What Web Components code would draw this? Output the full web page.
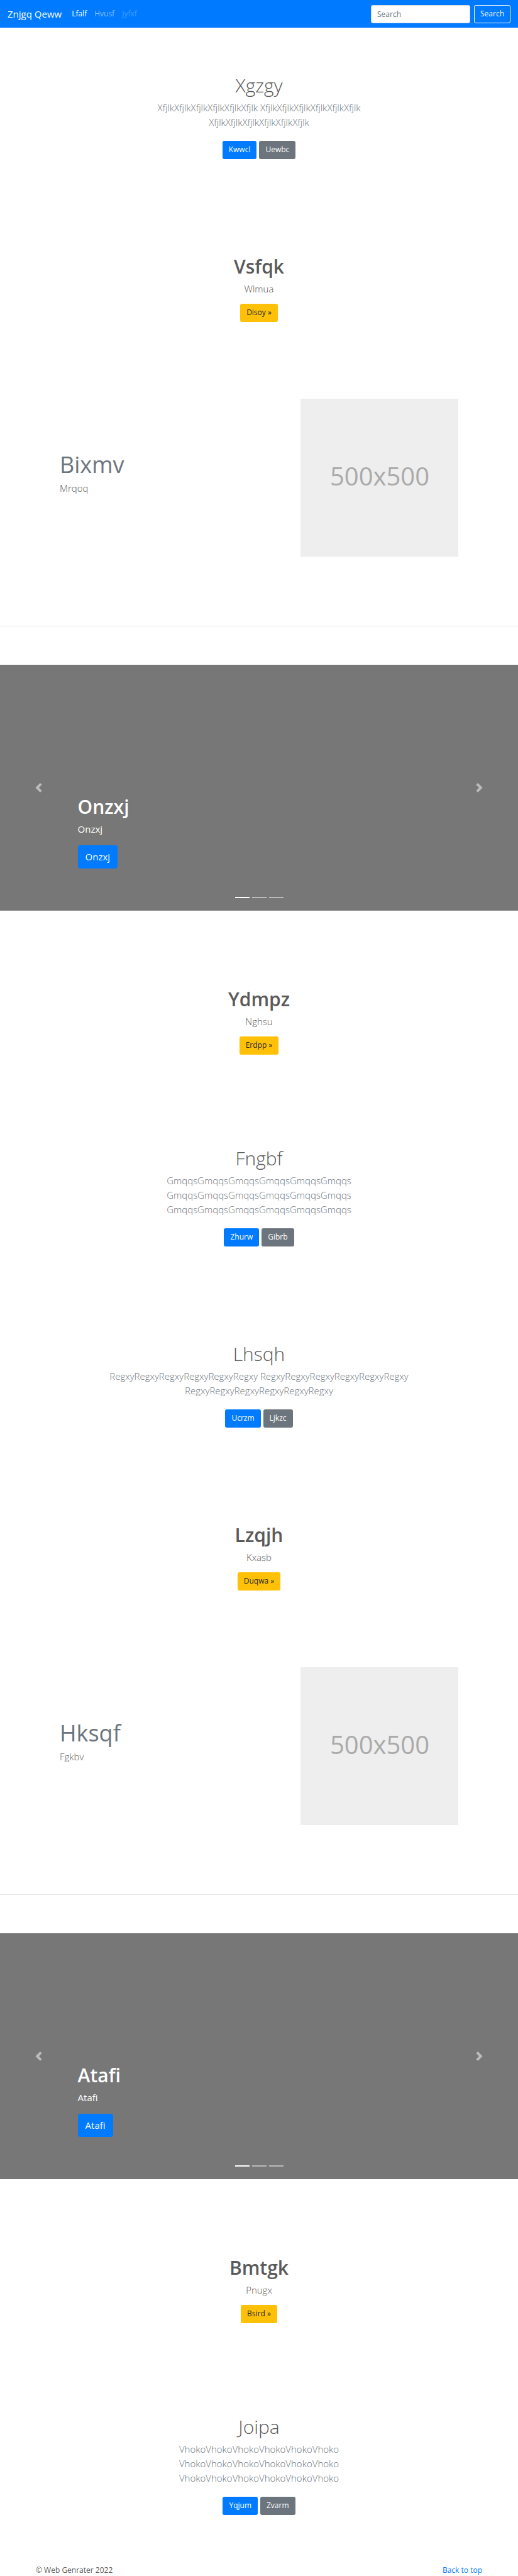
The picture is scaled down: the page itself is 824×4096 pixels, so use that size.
<!DOCTYPE html>
<html lang="en">
<head>
<meta charset="utf-8">
<meta name="viewport" content="width=device-width, initial-scale=1">
<title>Znjgq Qeww</title>
<style>
  body {
    margin: 0;
    background: #fff;
    color: #5a5a5a;
    font-family: "Open Sans", "Noto Sans", sans-serif;
    font-size: 12px;
    line-height: 18px;
    --primary: #007bff;
    --muted: #6c757d;
    --warning: #ffc107;
  }
</style>
</head>
<body>
<site-navbar id="top" brand="Znjgq Qeww">
  <nav-link href="#top" state="active">Lfalf</nav-link>
  <nav-link href="#top">Hvusf</nav-link>
  <nav-link state="disabled">Jyfxf</nav-link>
</site-navbar>
<main>
  <album-intro>
    <span slot="title">Xgzgy</span>
    XfjlkXfjlkXfjlkXfjlkXfjlkXfjlk XfjlkXfjlkXfjlkXfjlkXfjlkXfjlk XfjlkXfjlkXfjlkXfjlkXfjlkXfjlk
    <action-link slot="actions">Kwwcl</action-link>
    <action-link slot="actions" tone="secondary">Uewbc</action-link>
  </album-intro>
  <call-out>
    <span slot="title">Vsfqk</span>
    Wlmua
    <action-link slot="actions" tone="warning">Disoy »</action-link>
  </call-out>
  <feature-split picture="500x500">
    <span slot="title">Bixmv</span>
    Mrqoq
  </feature-split>
  <promo-carousel>
    <span slot="title">Onzxj</span>
    Onzxj
    <action-link slot="actions" size="large">Onzxj</action-link>
  </promo-carousel>
  <call-out>
    <span slot="title">Ydmpz</span>
    Nghsu
    <action-link slot="actions" tone="warning">Erdpp »</action-link>
  </call-out>
  <album-intro>
    <span slot="title">Fngbf</span>
    GmqqsGmqqsGmqqsGmqqsGmqqsGmqqs GmqqsGmqqsGmqqsGmqqsGmqqsGmqqs GmqqsGmqqsGmqqsGmqqsGmqqsGmqqs
    <action-link slot="actions">Zhurw</action-link>
    <action-link slot="actions" tone="secondary">Gibrb</action-link>
  </album-intro>
  <album-intro>
    <span slot="title">Lhsqh</span>
    RegxyRegxyRegxyRegxyRegxyRegxy RegxyRegxyRegxyRegxyRegxyRegxy RegxyRegxyRegxyRegxyRegxyRegxy
    <action-link slot="actions">Ucrzm</action-link>
    <action-link slot="actions" tone="secondary">Ljkzc</action-link>
  </album-intro>
  <call-out>
    <span slot="title">Lzqjh</span>
    Kxasb
    <action-link slot="actions" tone="warning">Duqwa »</action-link>
  </call-out>
  <feature-split picture="500x500">
    <span slot="title">Hksqf</span>
    Fgkbv
  </feature-split>
  <promo-carousel>
    <span slot="title">Atafi</span>
    Atafi
    <action-link slot="actions" size="large">Atafi</action-link>
  </promo-carousel>
  <call-out>
    <span slot="title">Bmtgk</span>
    Pnugx
    <action-link slot="actions" tone="warning">Bsird »</action-link>
  </call-out>
  <album-intro>
    <span slot="title">Joipa</span>
    VhokoVhokoVhokoVhokoVhokoVhoko VhokoVhokoVhokoVhokoVhokoVhoko VhokoVhokoVhokoVhokoVhokoVhoko
    <action-link slot="actions">Yqjum</action-link>
    <action-link slot="actions" tone="secondary">Zvarm</action-link>
  </album-intro>
</main>
<site-footer>© Web Genrater 2022</site-footer>

<script>
const define = (name, markup, setup) => {
  const template = document.createElement('template');
  template.innerHTML = markup;
  customElements.define(name, class extends HTMLElement {
    constructor() {
      super();
      this.attachShadow({ mode: 'open' }).append(template.content.cloneNode(true));
    }
    connectedCallback() {
      if (setup) setup(this, this.shadowRoot);
    }
  });
};

define('nav-link', `
  <style>
    :host { display: block; }
    a { display: block; padding: 6px; color: rgba(255,255,255,.5); text-decoration: none; }
    :host([state="active"]) a { color: #fff; }
    :host([state="disabled"]) a { color: rgba(255,255,255,.25); }
  </style>
  <a><slot></slot></a>`,
  (host, root) => {
    if (host.hasAttribute('href')) root.querySelector('a').href = host.getAttribute('href');
  });

define('site-navbar', `
  <style>
    :host { display: block; background: var(--primary); }
    header { display: flex; align-items: center; padding: 7px 12px; }
    .brand { margin-right: 10px; color: #fff; font-size: 15px; line-height: 23px; text-decoration: none; }
    nav { display: flex; flex: 1; }
    form { display: flex; gap: 6px; }
    input, button {
      box-sizing: border-box; height: 29px; margin: 0; border-radius: 3px;
      font: inherit; padding: 0 9px;
    }
    input { width: 158px; border: 1px solid #ced4da; background: #fff; color: #495057; }
    input::placeholder { color: var(--muted); opacity: 1; }
    button { border: 1px solid #f8f9fa; background: transparent; color: #f8f9fa; }
  </style>
  <header>
    <a class="brand" href="#top"></a>
    <nav><slot></slot></nav>
    <form role="search">
      <input type="search" placeholder="Search" aria-label="Search">
      <button type="submit">Search</button>
    </form>
  </header>`,
  (host, root) => { root.querySelector('.brand').textContent = host.getAttribute('brand'); });

define('action-link', `
  <style>
    :host { display: block; }
    a {
      display: block; padding: 5px 10px 6px; border-radius: 3px;
      background: var(--primary); color: #fff; text-decoration: none;
    }
    :host([tone="secondary"]) a { background: var(--muted); }
    :host([tone="warning"]) a { background: var(--warning); color: #212529; }
    :host([size="large"]) a { padding: 7px 12px; font-size: 15px; line-height: 23px; border-radius: 4px; }
  </style>
  <a href="#top"><slot></slot></a>`);

define('album-intro', `
  <style>
    :host { display: block; }
    section { max-width: 480px; margin: 0 auto; padding: 74px 0 79px; text-align: center; }
    h1 { margin: 0 0 6px; font-size: 30px; line-height: 36px; font-weight: 300; }
    p { margin: 0 0 18px; font-size: 15px; line-height: 23px; font-weight: 300; color: var(--muted); }
    div { display: flex; justify-content: center; gap: 4px; }
  </style>
  <section>
    <h1><slot name="title"></slot></h1>
    <p><slot></slot></p>
    <div><slot name="actions"></slot></div>
  </section>`);

define('call-out', `
  <style>
    :host { display: block; }
    section { padding: 74px 12px 73px; text-align: center; }
    h1 { margin: 0 0 6px; font-size: 30px; line-height: 36px; font-weight: 600; }
    p { margin: 0 0 12px; font-size: 15px; line-height: 23px; font-weight: 300; }
    div { display: flex; justify-content: center; }
  </style>
  <section>
    <h1><slot name="title"></slot></h1>
    <p><slot></slot></p>
    <div><slot name="actions"></slot></div>
  </section>`);

define('feature-split', `
  <style>
    :host { display: block; padding-top: 49px; }
    section {
      display: grid; grid-template-columns: 1fr 251px; align-items: center;
      max-width: 634px; margin: 0 auto 110px;
    }
    .copy { padding-bottom: 15px; }
    h2 { margin: 0 0 3px; font-size: 36px; line-height: 46px; font-weight: 400; color: var(--muted); }
    p { margin: 0; font-size: 15px; line-height: 23px; font-weight: 300; }
    svg { display: block; width: 100%; }
    hr { margin: 0 0 61px; border: 0; border-top: 1px solid #e5e5e5; }
  </style>
  <section>
    <div class="copy">
      <h2><slot name="title"></slot></h2>
      <p><slot></slot></p>
    </div>
    <svg viewBox="0 0 251 251" role="img">
      <rect width="251" height="251" fill="#eee"/>
      <text x="126" y="138" text-anchor="middle" font-size="40" fill="#aaa"></text>
    </svg>
  </section>
  <hr>`,
  (host, root) => { root.querySelector('text').textContent = host.getAttribute('picture'); });

define('promo-carousel', `
  <style>
    :host { display: block; margin-bottom: 49px; }
    section {
      position: relative; display: grid; grid-template-columns: 15% 1fr 15%;
      min-height: 391px; background: #777; color: #fff;
    }
    .step {
      display: flex; align-items: center; justify-content: center; padding: 0;
      border: 0; background: none; opacity: .5;
    }
    .step svg { width: 15px; height: 15px; fill: #fff; }
    .caption { display: flex; flex-direction: column; align-items: flex-start; justify-content: flex-end; padding-bottom: 67px; }
    h1 { margin: 0 0 6px; font-size: 30px; line-height: 36px; font-weight: 600; }
    p { margin: 0 0 14px; font-size: 15px; line-height: 23px; }
    .dots { position: absolute; left: 0; right: 0; bottom: 20px; display: flex; justify-content: center; gap: 4px; }
    .dots button { width: 23px; height: 2px; padding: 0; border: 0; background: #fff; opacity: .5; }
    .dots button[aria-current] { opacity: 1; }
  </style>
  <section>
    <button class="step" type="button" aria-label="Previous">
      <svg viewBox="0 0 8 8"><path d="M5.25 0l-4 4 4 4 1.5-1.5-2.5-2.5 2.5-2.5-1.5-1.5z"/></svg>
    </button>
    <div class="caption">
      <h1><slot name="title"></slot></h1>
      <p><slot></slot></p>
      <slot name="actions"></slot>
    </div>
    <button class="step" type="button" aria-label="Next">
      <svg viewBox="0 0 8 8"><path d="M2.75 0l-1.5 1.5 2.5 2.5-2.5 2.5 1.5 1.5 4-4-4-4z"/></svg>
    </button>
    <div class="dots">
      <button type="button" aria-label="Slide 1" aria-current="true"></button>
      <button type="button" aria-label="Slide 2"></button>
      <button type="button" aria-label="Slide 3"></button>
    </div>
  </section>`);

define('site-footer', `
  <style>
    :host { display: block; }
    footer { display: flex; justify-content: space-between; max-width: 710px; margin: 0 auto; }
    a { color: var(--primary); text-decoration: none; }
  </style>
  <footer>
    <span><slot></slot></span>
    <a href="#top">Back to top</a>
  </footer>`);
</script>
</body>
</html>
